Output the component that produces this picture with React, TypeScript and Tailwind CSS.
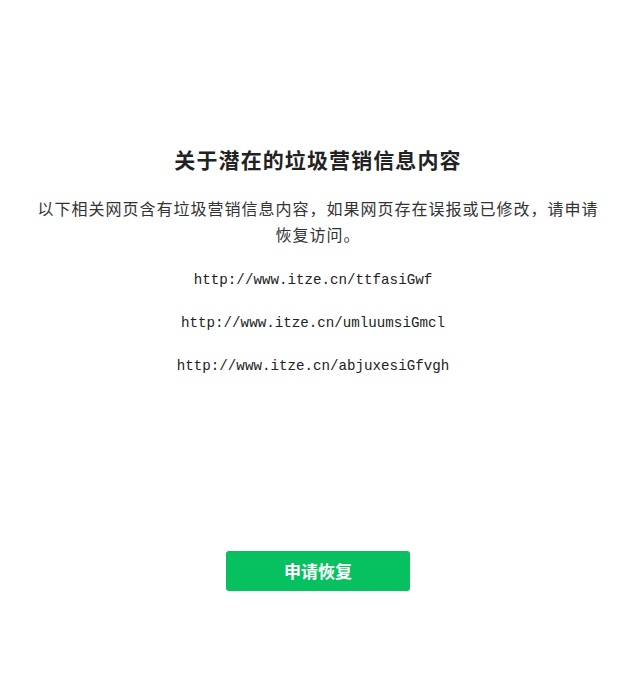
export default function App() {
  const urls = [
    "http://www.itze.cn/ttfasiGwf",
    "http://www.itze.cn/umluumsiGmcl",
    "http://www.itze.cn/abjuxesiGfvgh",
  ];
  return (
    <div className="w-[636px] h-[687px] bg-white flex flex-col items-center pt-[146px] px-[30px] text-[#222]">
      <h1 className="font-['Liberation_Serif','Noto_Sans_CJK_SC',serif] text-[21px] leading-[30px] font-bold tracking-[1.1px]">
        关于潜在的垃圾营销信息内容
      </h1>
      <p className="font-['Noto_Sans_CJK_SC',sans-serif] mt-[19px] text-[16px] leading-[26px] tracking-[1px] text-center text-[#333]">
        以下相关网页含有垃圾营销信息内容，如果网页存在误报或已修改，请申请恢复访问。
      </p>
      <div className="mt-[23px] pr-[10px] flex flex-col items-center gap-[23px]">
        {urls.map((u) => (
          <div
            key={u}
            className="font-['Liberation_Mono',monospace] text-[14.2px] leading-[20px] text-[#222]"
          >
            {u}
          </div>
        ))}
      </div>
      <button className="font-['Noto_Sans_CJK_SC',sans-serif] mt-[175px] w-[184px] h-[40px] rounded-[3px] bg-[#07c160] text-white text-[17px] font-bold">
        申请恢复
      </button>
    </div>
  );
}
